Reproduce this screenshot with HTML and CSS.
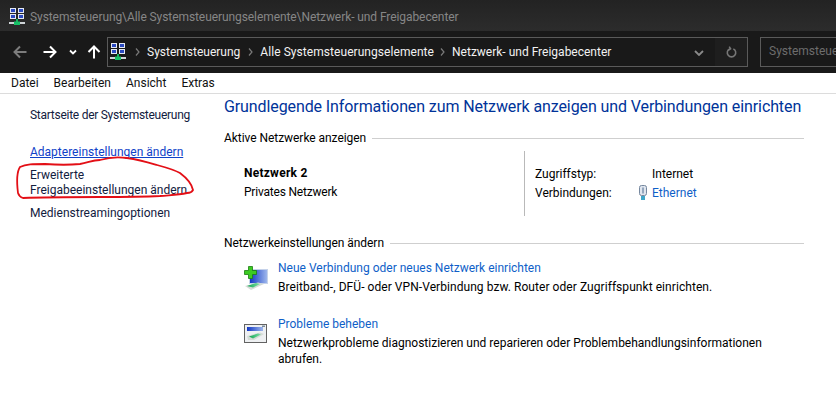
FILE: index.html
```html
<!DOCTYPE html>
<html lang="de">
<head>
<meta charset="utf-8">
<title>Netzwerk- und Freigabecenter</title>
<link rel="stylesheet" href="styles.css">
</head>
<body>
<svg width="0" height="0" class="defs"><defs>
<symbol id="cp" viewBox="0 0 16 18">
<rect x="1" y="0" width="6" height="5" fill="#e4e9f3"/><rect x="2" y="1" width="4" height="3" fill="#2a49c0"/>
<rect x="9" y="0" width="6" height="5" fill="#e4e9f3"/><rect x="10" y="1" width="4" height="3" fill="#2a49c0"/>
<rect x="1" y="6" width="6" height="5" fill="#e4e9f3"/><rect x="2" y="7" width="4" height="3" fill="#2a49c0"/>
<rect x="9" y="6" width="6" height="5" fill="#e4e9f3"/><rect x="10" y="7" width="4" height="3" fill="#2a49c0"/>
<rect x="7" y="11" width="2" height="3" fill="#17b45f"/>
<rect x="0" y="14" width="16" height="2" fill="#cfd5d8"/><rect x="5" y="13.500" width="6" height="3.500" fill="#17c066"/>
</symbol>
<linearGradient id="scr" x1="0" y1="0" x2="1" y2="0"><stop offset="0" stop-color="#1238c4"/><stop offset="1" stop-color="#9db6ec"/></linearGradient>
<linearGradient id="net" x1="0" y1="0" x2="1" y2="0"><stop offset="0" stop-color="#0fa552"/><stop offset="1" stop-color="#7fe0a8"/></linearGradient>
</defs></svg>
<header class="titlebar">
<svg class="titleicon"><use href="#cp"/></svg>
<span class="titletext">Systemsteuerung\Alle Systemsteuerungselemente\Netzwerk- und Freigabecenter</span>
</header>
<nav class="navbar">
<svg class="navbtn dim" viewBox="0 0 14 14"><path d="M13.500 7H1.500M7 1.500 1.500 7 7 12.500" fill="none" stroke="currentColor" stroke-width="2"/></svg>
<svg class="navbtn fwd" viewBox="0 0 14 14"><path d="M.5 7h12M7 1.500 12.500 7 7 12.500" fill="none" stroke="currentColor" stroke-width="2"/></svg>
<svg class="navchev" viewBox="0 0 8 6"><path d="M1 1.500 4 4.500 7 1.500" fill="none" stroke="currentColor" stroke-width="1.800"/></svg>
<svg class="navbtn up" viewBox="0 0 14 14"><path d="M7 13.500V1.500M1.500 7 7 1.500 12.500 7" fill="none" stroke="currentColor" stroke-width="2"/></svg>
<div class="address">
<svg class="addricon"><use href="#cp"/></svg>
<svg class="sep" viewBox="0 0 5 8"><path d="M1 .5 4 4 1 7.500" fill="none" stroke="currentColor" stroke-width="1.200"/></svg><span class="crumb">Systemsteuerung</span>
<svg class="sep" viewBox="0 0 5 8"><path d="M1 .5 4 4 1 7.500" fill="none" stroke="currentColor" stroke-width="1.200"/></svg><span class="crumb wide">Alle Systemsteuerungselemente</span>
<svg class="sep" viewBox="0 0 5 8"><path d="M1 .5 4 4 1 7.500" fill="none" stroke="currentColor" stroke-width="1.200"/></svg><span class="crumb">Netzwerk- und Freigabecenter</span>
<svg class="addrchev" viewBox="0 0 10 6"><path d="M1 1 5 5 9 1" fill="none" stroke="currentColor" stroke-width="1.800"/></svg>
<span class="refresh"><svg viewBox="0 0 12 14"><path d="M4 3a4.600 4.600 0 1 0 4 0M3.500 .5l1.500 2.500-2.500 1.500" fill="none" stroke="currentColor" stroke-width="1.700"/></svg></span>
</div>
<div class="search">Systemsteuerung durchsuchen</div>
</nav>
<div class="menubar"><span>Datei</span><span>Bearbeiten</span><span>Ansicht</span><span>Extras</span></div>
<main class="content">
<aside class="side">
<div class="sidelink home">Startseite der Systemsteuerung</div>
<a class="sidelink adapter">Adaptereinstellungen ändern</a>
<div class="sidelink extra">Erweiterte<br>Freigabeeinstellungen ändern</div>
<div class="sidelink media">Medienstreamingoptionen</div>
</aside>
<section class="panel">
<h1>Grundlegende Informationen zum Netzwerk anzeigen und Verbindungen einrichten</h1>
<div class="sectionhead aktiv"><span>Aktive Netzwerke anzeigen</span><i></i></div>
<div class="network">
<div class="netname"><b>Netzwerk 2</b><span>Privates Netzwerk</span></div>
<div class="netinfo">
<span class="k">Zugriffstyp:</span><span class="i"></span><span>Internet</span>
<span class="k">Verbindungen:</span>
<svg class="eth" viewBox="0 0 10 15"><rect x="1.500" y=".5" width="7" height="10" rx="2" fill="#dfe5ee" stroke="#75879e"/><rect x="4" y="2.500" width="2" height="6" fill="#95a8bf"/><rect x="3" y="11" width="4" height="4" fill="#3fa6c9"/></svg>
<a class="lnk">Ethernet</a>
</div>
</div>
<div class="sectionhead einst"><span>Netzwerkeinstellungen ändern</span><i></i></div>
<div class="task first">
<svg class="taskicon" viewBox="0 0 24 24">
<rect x="5" y="3" width="19" height="15" fill="#c5d2ea"/><rect x="6" y="4" width="17" height="13" fill="url(#scr)"/>
<path d="M1 20 14 16.500l6 1.500-13 6z" fill="#d5dbd6"/><path d="M3 20 12 17l4 1-7 3.500z" fill="url(#net)"/>
<path d="M4.500.5h4v4h4v4h-4v4h-4v-4h-4v-4h4z" fill="#3ccb22" stroke="#1a7d12" stroke-width=".8"/>
</svg>
<div class="tasktext"><a class="lnk">Neue Verbindung oder neues Netzwerk einrichten</a><p class="loose">Breitband-, DFÜ- oder VPN-Verbindung bzw. Router oder Zugriffspunkt einrichten.</p></div>
</div>
<div class="task second">
<svg class="taskicon" viewBox="0 0 24 22">
<rect x=".5" y=".5" width="22" height="18" fill="#eef0f2" stroke="#626262"/><rect x="3" y="3" width="16" height="4" fill="url(#scr)"/><rect x="18" y="1.500" width="3" height="1.500" fill="#7d8b99"/>
<path d="M3 12 16 8.500l4 1.500-10 6H4z" fill="#d5dbd6"/><path d="M5 12.500 14 9.500l3 1-8 4z" fill="url(#net)"/>
</svg>
<div class="tasktext"><a class="lnk">Probleme beheben</a><p>Netzwerkprobleme diagnostizieren und reparieren oder Problembehandlungsinformationen abrufen.</p></div>
</div>
</section>
</main>
<svg class="circle" viewBox="0 0 195 70"><path d="M20 37C26 34 33 34 45 34 58 35 70 35 80 34 88 33 92 30 100 30 110 27 120 27 127 28 140 30 150 33 157 35 168 38 175 40 180 43 188 49 192 55 193 60 192 62 190 63 187 63 178 65 170 65 160 66 140 67 120 67 100 67 75 67 45 67 23 68 20 67 19 66 18 63 17 55 16 43 20 37Z" fill="none" stroke="#e30f16" stroke-width="1.800"/></svg>
</body>
</html>
```
FILE: styles.css
```css
* { box-sizing: border-box; }
html, body { margin: 0; padding: 0; }
body { width: 836px; height: 415px; overflow: hidden; background: #fff; position: relative; font-family: Roboto, "Noto Sans", sans-serif; font-size: 12px; color: #000; }
.defs { position: absolute; }
.titlebar { height: 31px; background: linear-gradient(#232323, #2c2c2c); display: flex; align-items: center; padding: 3px 0 0 9px; }
.titleicon { width: 16px; height: 18px; }
.titletext { margin-left: 5px; color: #868686; white-space: nowrap; letter-spacing: -.08px; }
.navbar { height: 42px; background: #191919; display: flex; align-items: center; padding-left: 13px; color: #fff; }
.navbtn { width: 14px; height: 14px; flex: none; }
.dim { color: #7c7c7c; }
.fwd { margin-left: 16px; }
.navchev { width: 8px; height: 6px; margin-left: 12px; flex: none; }
.up { margin-left: 10px; }
.address { margin-left: 6px; width: 641px; height: 30px; border: 1px solid #5a5a5a; display: flex; align-items: center; padding-left: 2px; position: relative; white-space: nowrap; }
.addricon { width: 16px; height: 18px; margin-right: 9px; flex: none; }
.sep { width: 5px; height: 8px; flex: none; color: #7a7a7a; margin-right: 7px; }
.crumb { margin-right: 8px; color: #f2f2f2; }
.wide { letter-spacing: .06px; margin-right: 6px; }
.addrchev { width: 10px; height: 6px; position: absolute; right: 43px; top: 12px; color: #8a8a8a; }
.refresh { position: absolute; right: 0; top: 0; bottom: 0; width: 32px; background: #1e1e1e; color: #777; display: flex; align-items: center; justify-content: center; }
.refresh svg { width: 11px; height: 13px; }
.search { margin-left: 12px; width: 76px; flex: none; height: 30px; border: 1px solid #5a5a5a; border-right: 0; color: #6d6d6d; padding: 6px 0 0 8px; white-space: nowrap; overflow: hidden; }
.menubar { height: 21px; background: #fff; border-bottom: 1px solid #dcdcdc; display: flex; gap: 15px; padding: 3px 0 0 11px; color: #111; }
.content { display: flex; }
.side { width: 224px; flex: none; padding: 14px 0 0 30px; display: flex; flex-direction: column; }
.sidelink { color: #12203e; line-height: 15px; white-space: nowrap; }
.home { letter-spacing: -.27px; }
.adapter { color: #0f42c8; text-decoration: underline; margin-top: 22px; }
.extra { margin-top: 8px; }
.media { margin-top: 8px; }
.panel { flex: 1; }
h1 { margin: 2px 0 0; font-size: 16px; line-height: 21px; font-weight: 400; color: #003399; white-space: nowrap; letter-spacing: -.1px; }
.sectionhead { display: flex; align-items: center; gap: 6px; width: 580px; line-height: 16px; letter-spacing: -.05px; }
.sectionhead i { flex: 1; height: 1px; background: #cfcfcf; }
.aktiv { margin-top: 13px; }
.network { display: flex; height: 65px; margin-top: 5px; }
.netname { width: 301px; padding: 13px 0 0 20px; display: flex; flex-direction: column; line-height: 19px; border-right: 1px solid #b9b9b9; }
.netname span { letter-spacing: -.2px; }
.netname b { letter-spacing: .25px; }
.netinfo { padding: 13px 0 0 10px; display: grid; grid-template-columns: 103px 14px auto; grid-auto-rows: 19px; align-items: center; justify-content: start; }
.eth { width: 10px; height: 15px; }
.lnk { color: #0f5fc8; }
.einst { margin-top: 19px; }
.task { display: flex; margin-left: 20px; width: 525px; }
.first { margin-top: 9px; }
.second { margin-top: 21px; }
.first .taskicon { margin-top: 6px; width: 24px; height: 24px; }
.second .taskicon { margin-top: 8px; width: 24px; height: 22px; }
.taskicon { flex: none; }
.tasktext { margin-left: 10px; line-height: 16px; }
.tasktext p { margin: 3px 0 0; }
.tasktext .loose { letter-spacing: .06px; }
.circle { position: absolute; left: 0; top: 130px; width: 195px; height: 70px; }
```
